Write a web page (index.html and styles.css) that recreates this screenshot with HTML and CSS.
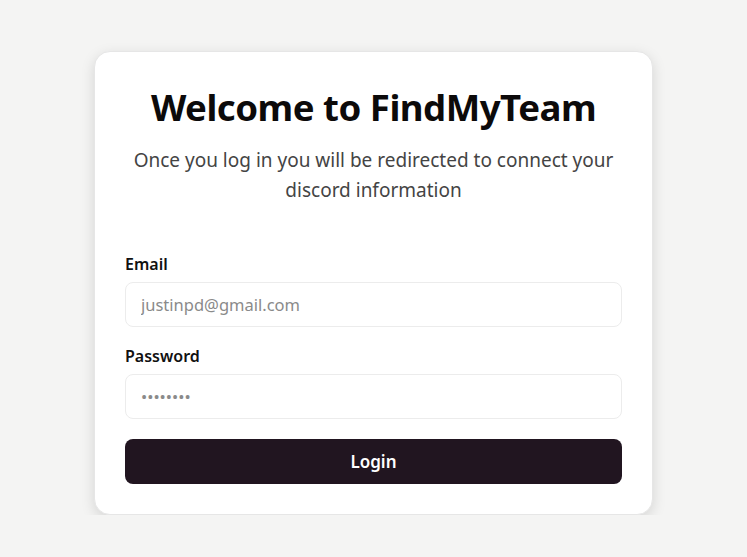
FILE: index.html
```html
<!DOCTYPE html>
<html lang="en">
<head>
    <meta charset="UTF-8">
    <meta name="viewport" content="width=device-width, initial-scale=1.0">
    <title>FindMyTeam Login</title>
    <link rel="stylesheet" href="styles.css">
</head>
<body>
<div class="login-card">
    <h1>Welcome to FindMyTeam</h1>
    <p class="subtitle">Once you log in you will be redirected to connect your discord information</p>
    <form class="login-form">
        <label for="email">Email</label>
        <input type="email" id="email" placeholder="justinpd@gmail.com">
        <label for="password">Password</label>
        <input type="password" id="password" placeholder="••••••••">
        <button type="button">Login</button>
    </form>
</div>
</body>
</html>
```

FILE: styles.css
```css
body {
    font-family: "Noto Sans", "Open Sans", sans-serif;
    margin: 0;
    padding: 51px 0 0;
    background-color: #f4f4f3;
}

.login-card {
    width: 559px;
    margin: 0 auto;
    box-sizing: border-box;
    padding: 30px;
    background-color: white;
    border: 1px solid #e6e6e6;
    border-radius: 16px;
    box-shadow: 0 4px 14px rgba(0, 0, 0, 0.13);
    text-align: center;
}

.login-card h1 {
    margin: 0;
    font-size: 36.6px;
    line-height: 50px;
    font-weight: 700;
    color: #0c0a0a;
    letter-spacing: -0.5px;
}

.subtitle {
    margin: 13px 0 0;
    font-size: 19px;
    line-height: 30px;
    color: #444;
}

.login-form {
    display: flex;
    flex-direction: column;
    margin-top: 48px;
    text-align: left;
}

.login-form label {
    font-size: 16px;
    font-weight: 600;
    line-height: 22px;
    color: #111;
    margin-bottom: 7px;
}

.login-form input {
    height: 45px;
    box-sizing: border-box;
    padding: 0 15px;
    font-family: inherit;
    font-size: 16.5px;
    border: 1px solid #ececec;
    border-radius: 8px;
    margin-bottom: 18px;
    outline: none;
}

.login-form input::placeholder {
    color: #8a8a8a;
}

.login-form button {
    margin-top: 2px;
    height: 45px;
    background-color: #211520;
    color: white;
    font-family: inherit;
    font-size: 17px;
    font-weight: 600;
    border: none;
    border-radius: 8px;
    cursor: pointer;
}
```
